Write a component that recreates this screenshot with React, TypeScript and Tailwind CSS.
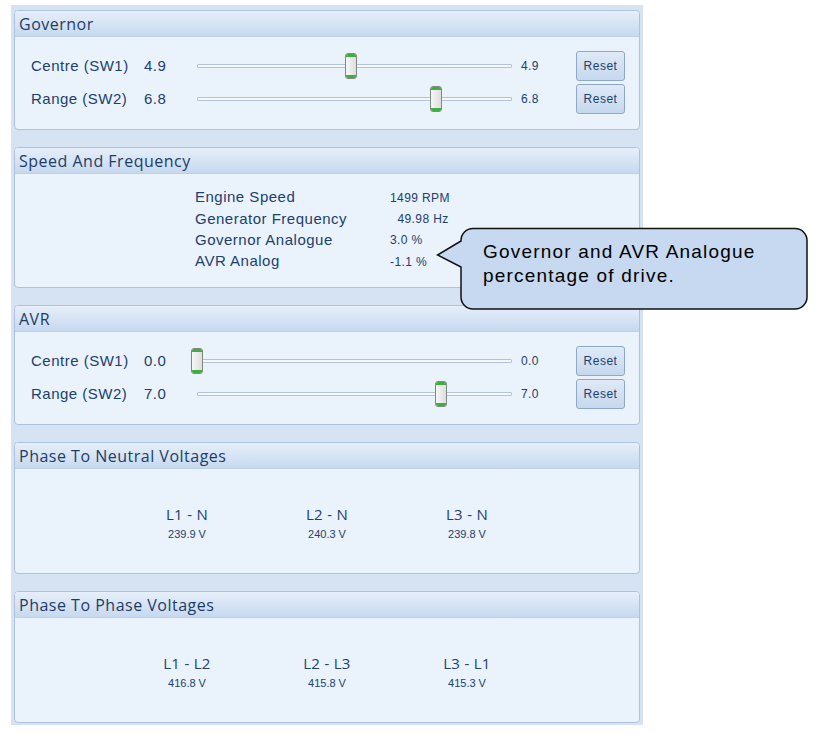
import React from 'react';

const arial = { fontFamily: '"Liberation Sans", Arial, sans-serif' };
const segoe = { fontFamily: '"Open Sans", "Noto Sans", sans-serif' };

interface SliderRow {
  label: string;
  value: string;
  pct: number;
}

const Panel: React.FC<{ title: string; height: string; children: React.ReactNode }> = ({
  title,
  height,
  children,
}) => (
  <div className={`${height} rounded-[4px] border border-[#adc3dd] bg-[#eaf2fb] overflow-hidden`}>
    <div
      className="h-[26px] bg-gradient-to-b from-[#e6effa] to-[#c7d9ef] border-b border-[#bcd0e7] px-[4px] flex items-center text-[16px] tracking-[0.5px] text-[#1e3c68]"
      style={segoe}
    >
      {title}
    </div>
    {children}
  </div>
);

const Slider: React.FC<{ pct: number }> = ({ pct }) => (
  <div className="relative w-[328px] h-[30px]">
    {/* track */}
    <div className="absolute left-[7px] right-[6px] top-[13px] h-[4px] border border-[#b3c4d8] bg-[#f5f8fc] rounded-[1px]" />
    {/* thumb */}
    <div
      className="absolute top-[2px] w-[12px] h-[26px] rounded-[3px] border border-[#7d8a80] bg-gradient-to-r from-[#f7f7f7] to-[#dedede] overflow-hidden flex flex-col justify-between"
      style={{ left: `calc(1px + ${pct} * 315px)` }}
    >
      <div className="h-[3px] bg-[#3fae3f]" />
      <div className="h-[3px] bg-[#3fae3f]" />
    </div>
  </div>
);

const SliderPanelBody: React.FC<{ rows: SliderRow[] }> = ({ rows }) => (
  <div className="pt-[14px] pl-[16px] flex flex-col gap-[3px]">
    {rows.map((r) => (
      <div key={r.label} className="flex items-center h-[30px]">
        <div className="w-[113px] text-[15px] tracking-[0.5px] text-[#213f6e]" style={arial}>
          {r.label}
        </div>
        <div className="w-[46px] text-[15px] tracking-[0.5px] text-[#213f6e]" style={arial}>
          {r.value}
        </div>
        <Slider pct={r.pct} />
        <div className="ml-[3px] w-[55px] text-[12px] tracking-[0.4px] text-[#213f6e]" style={arial}>
          {r.value}
        </div>
        <button
          className="w-[49px] h-[30px] rounded-[3px] border border-[#8ea8c8] bg-gradient-to-b from-[#dfeaf7] to-[#c6d8ee] text-[12px] tracking-[0.5px] text-[#213f6e]"
          style={arial}
        >
          Reset
        </button>
      </div>
    ))}
  </div>
);

const PhaseBody: React.FC<{ items: { label: string; value: string }[] }> = ({ items }) => (
  <div className="pt-[35px] pl-[102px] grid grid-cols-[140px_140px_140px]">
    {items.map((it) => (
      <div key={it.label} className="flex flex-col items-center text-[#22416f]">
        <div className="text-[15px] leading-[20px] tracking-[0.3px]" style={segoe}>
          {it.label}
        </div>
        <div className="text-[11px] leading-[20px]" style={arial}>
          {it.value}
        </div>
      </div>
    ))}
  </div>
);

const speedRows = [
  { label: 'Engine Speed', value: '1499 RPM' },
  { label: 'Generator Frequency', value: '\u00a0 49.98 Hz' },
  { label: 'Governor Analogue', value: '3.0 %' },
  { label: 'AVR Analog', value: '-1.1 %' },
];

export default function App() {
  return (
    <div className="relative w-[821px] h-[735px] bg-white">
      <div className="ml-[11px] mt-[5px] w-[632px] pt-[5px] pb-[2px] px-[3px] bg-[#d5e3f3] flex flex-col gap-[17px]">
        <Panel title="Governor" height="h-[120px]">
          <SliderPanelBody
            rows={[
              { label: 'Centre (SW1)', value: '4.9', pct: 0.49 },
              { label: 'Range (SW2)', value: '6.8', pct: 0.76 },
            ]}
          />
        </Panel>

        <Panel title="Speed And Frequency" height="h-[141px]">
          <div className="pt-[13px] pl-[180px] flex flex-col">
            {speedRows.map((r) => (
              <div key={r.label} className="flex items-center h-[21.3px]">
                <div className="w-[195px] text-[15px] tracking-[0.5px] text-[#213f6e]" style={arial}>
                  {r.label}
                </div>
                <div className="text-[12px] tracking-[0.4px] text-[#213f6e] whitespace-pre" style={arial}>
                  {r.value}
                </div>
              </div>
            ))}
          </div>
        </Panel>

        <Panel title="AVR" height="h-[120px]">
          <SliderPanelBody
            rows={[
              { label: 'Centre (SW1)', value: '0.0', pct: 0 },
              { label: 'Range (SW2)', value: '7.0', pct: 0.775 },
            ]}
          />
        </Panel>

        <Panel title="Phase To Neutral Voltages" height="h-[132px]">
          <PhaseBody
            items={[
              { label: 'L1 - N', value: '239.9 V' },
              { label: 'L2 - N', value: '240.3 V' },
              { label: 'L3 - N', value: '239.8 V' },
            ]}
          />
        </Panel>

        <Panel title="Phase To Phase Voltages" height="h-[132px]">
          <PhaseBody
            items={[
              { label: 'L1 - L2', value: '416.8 V' },
              { label: 'L2 - L3', value: '415.8 V' },
              { label: 'L3 - L1', value: '415.3 V' },
            ]}
          />
        </Panel>
      </div>

      {/* callout */}
      <div className="absolute left-[436px] top-[222px] w-[374px] h-[84px]">
        <svg width="374" height="84" viewBox="0 0 374 84" className="absolute inset-0">
          <path
            d="M 37 1.5 H 359 A 12 12 0 0 1 371 13.5 V 70 A 12 12 0 0 1 359 82 H 37 A 12 12 0 0 1 25 70 V 40 L 1.5 28 L 25 14 V 13.5 A 12 12 0 0 1 37 1.5 Z"
            fill="#c6d9f1"
            stroke="#111"
            strokeWidth="1.5"
          />
        </svg>
        <div
          className="absolute left-[47px] top-[13px] text-[19px] leading-[24px] tracking-[1.2px] text-black"
          style={arial}
        >
          Governor and AVR Analogue
          <br />
          percentage of drive.
        </div>
      </div>
    </div>
  );
}
